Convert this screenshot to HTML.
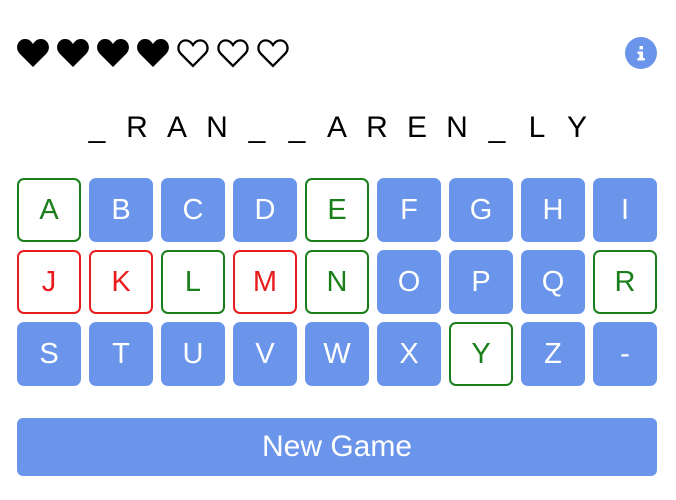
<!DOCTYPE html>
<html><head><style>
body{margin:0;width:676px;height:500px;background:#fff;font-family:"Liberation Sans",Arial,sans-serif;position:relative;overflow:hidden}
.h{position:absolute;top:38px;width:34px;height:30px}
.info{position:absolute;left:625px;top:37px;width:32px;height:32px;border-radius:50%;background:#6b95ea}
.word{position:absolute;top:108px;left:0;width:676px;height:40px}
.word span{position:absolute;width:40px;text-align:center;font-size:30px;line-height:40px;color:#000}
.k{position:absolute;width:64px;height:64px;border-radius:7px;background:#6b95ea;color:#fff;font-size:29px;line-height:64px;text-align:center;box-sizing:border-box}
.g{background:#fff;border:2px solid #1a7f1a;color:#1a7f1a;line-height:60px}
.r{background:#fff;border:2px solid #e81c1c;color:#e81c1c;line-height:60px}
.btn{position:absolute;left:17px;top:418px;width:640px;height:58px;border-radius:6px;background:#6b95ea;color:#fff;font-size:30px;line-height:58px;text-align:center}
</style></head><body>
<svg width="0" height="0" style="position:absolute"><defs><path id="hp" d="M17 29 L4 16 C-2 10 2 1 9 1 C13 1 15 3 17 6 C19 3 21 1 25 1 C32 1 36 10 30 16 Z"/></defs></svg>
<svg class="h" style="left:16px" viewBox="0 0 34 30"><use href="#hp" fill="#000"/></svg>
<svg class="h" style="left:56px" viewBox="0 0 34 30"><use href="#hp" fill="#000"/></svg>
<svg class="h" style="left:96px" viewBox="0 0 34 30"><use href="#hp" fill="#000"/></svg>
<svg class="h" style="left:136px" viewBox="0 0 34 30"><use href="#hp" fill="#000"/></svg>
<svg class="h" style="left:176px" viewBox="0 0 34 30"><use href="#hp" fill="none" stroke="#000" stroke-width="2.5" transform="translate(1.5 1.5) scale(0.91)"/></svg>
<svg class="h" style="left:216px" viewBox="0 0 34 30"><use href="#hp" fill="none" stroke="#000" stroke-width="2.5" transform="translate(1.5 1.5) scale(0.91)"/></svg>
<svg class="h" style="left:256px" viewBox="0 0 34 30"><use href="#hp" fill="none" stroke="#000" stroke-width="2.5" transform="translate(1.5 1.5) scale(0.91)"/></svg>
<div class="info"><svg width="32" height="32" viewBox="0 0 32 32"><rect x="14.5" y="9" width="3.5" height="3.5" fill="#fff"/><path d="M12.5 14.5h5.5v6.5h1.8v2.5h-7.3v-2.5h1.8v-4h-1.8z" fill="#fff"/></svg></div>
<div class="word">
<span style="left:77px">_</span><span style="left:117px">R</span><span style="left:157px">A</span><span style="left:197px">N</span><span style="left:237px">_</span><span style="left:277px">_</span><span style="left:317px">A</span><span style="left:357px">R</span><span style="left:397px">E</span><span style="left:437px">N</span><span style="left:477px">_</span><span style="left:517px">L</span><span style="left:557px">Y</span>
</div>
<div class="k g" style="left:17px;top:178px">A</div><div class="k" style="left:89px;top:178px">B</div><div class="k" style="left:161px;top:178px">C</div><div class="k" style="left:233px;top:178px">D</div><div class="k g" style="left:305px;top:178px">E</div><div class="k" style="left:377px;top:178px">F</div><div class="k" style="left:449px;top:178px">G</div><div class="k" style="left:521px;top:178px">H</div><div class="k" style="left:593px;top:178px">I</div>
<div class="k r" style="left:17px;top:250px">J</div><div class="k r" style="left:89px;top:250px">K</div><div class="k g" style="left:161px;top:250px">L</div><div class="k r" style="left:233px;top:250px">M</div><div class="k g" style="left:305px;top:250px">N</div><div class="k" style="left:377px;top:250px">O</div><div class="k" style="left:449px;top:250px">P</div><div class="k" style="left:521px;top:250px">Q</div><div class="k g" style="left:593px;top:250px">R</div>
<div class="k" style="left:17px;top:322px">S</div><div class="k" style="left:89px;top:322px">T</div><div class="k" style="left:161px;top:322px">U</div><div class="k" style="left:233px;top:322px">V</div><div class="k" style="left:305px;top:322px">W</div><div class="k" style="left:377px;top:322px">X</div><div class="k g" style="left:449px;top:322px">Y</div><div class="k" style="left:521px;top:322px">Z</div><div class="k" style="left:593px;top:322px">-</div>
<div class="btn">New Game</div>
</body></html>
